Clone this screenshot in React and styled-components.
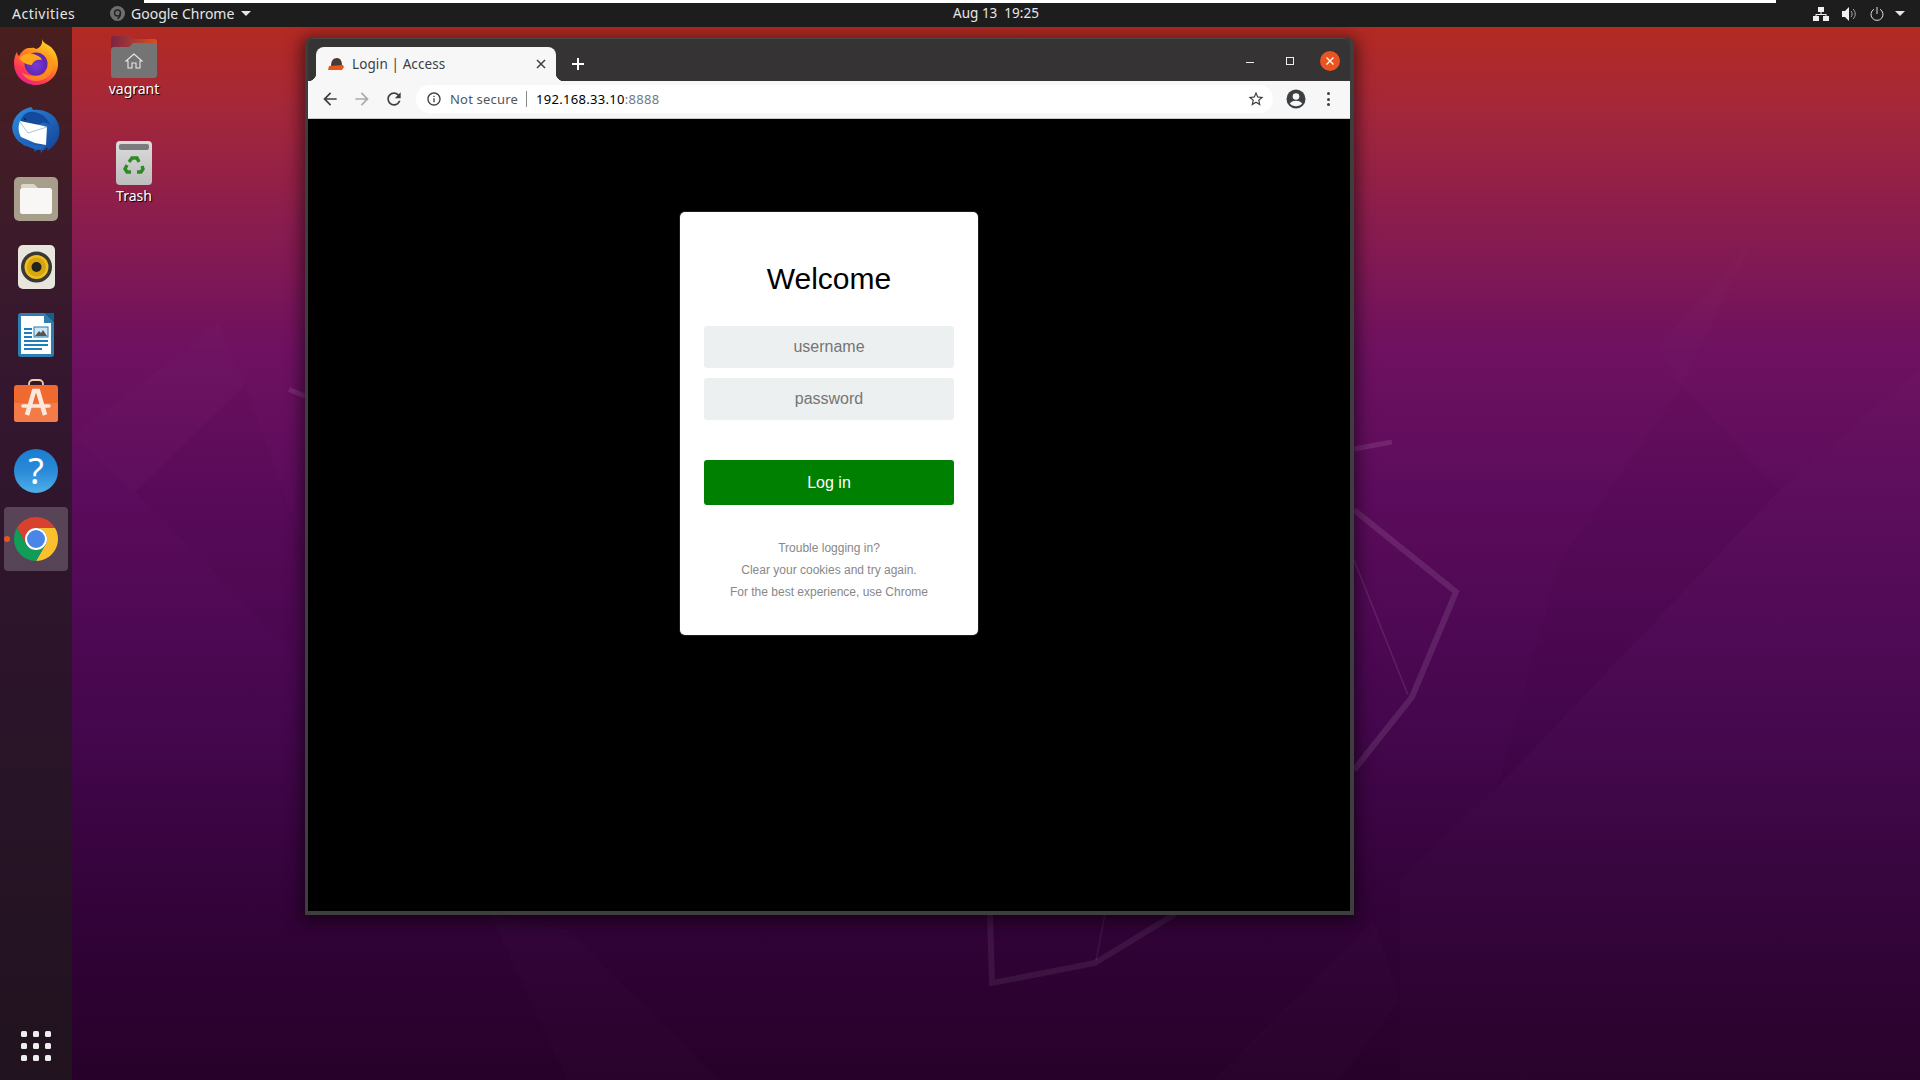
import React from 'react';
import styled, { createGlobalStyle } from 'styled-components';

const Global = createGlobalStyle`
  html, body { margin: 0; padding: 0; background: #000; }
  body { width: 1920px; height: 1080px; overflow: hidden; font-family: "Noto Sans", sans-serif; }
  input::placeholder { color: #757575; opacity: 1; }
`;

const Screen = styled.div`
  position: relative; width: 1920px; height: 1080px; overflow: hidden;
  display: flex; flex-direction: column;
  background: linear-gradient(180deg, #b32a23 0, #b32a23 30px, #a4273a 110px, #8a1d4e 220px, #6e1160 350px, #5c0c5c 490px, #47074f 700px, #33033a 900px, #270129 1080px);
`;
const Wallpaper = styled.svg`position: absolute; left: 0; top: 0; width: 1920px; height: 1080px;`;
const TopBar = styled.header`
  position: relative; z-index: 2; height: 27px; flex: none; background: #1d1d1d; color: #e6e6e6;
  display: grid; grid-template-columns: 1fr auto 1fr; align-items: center; font-size: 14px; line-height: 27px;
`;
const LoadStrip = styled.div`position: absolute; left: 144px; top: 0; width: 1632px; height: 3px; background: #fff;`;
const TopLeft = styled.div`display: flex; align-items: center; padding-left: 12px;`;
const Activities = styled.span`width: 98px; flex: none; letter-spacing: .5px;`;
const AppMenu = styled.span`display: flex; align-items: center; gap: 6px; letter-spacing: 0;`;
const Caret = styled.i`width: 0; height: 0; border: 5px solid transparent; border-top: 5px solid #e6e6e6; border-bottom: 0; margin-left: 1px;`;
const TrayCaret = styled(Caret)`margin-left: -2px;`;
const Clock = styled.time`font-size: 13.5px; white-space: pre; margin-left: 72px;`;
const Tray = styled.div`display: flex; justify-content: flex-end; align-items: center; gap: 13px; padding-right: 15px;`;
const Body = styled.div`position: relative; z-index: 1; flex: 1; display: flex; min-height: 0;`;
const Dock = styled.nav`
  width: 72px; flex: none; background: rgba(32, 26, 28, .72); display: flex; flex-direction: column; align-items: center;
  padding: 2px 0 16px; box-sizing: border-box;
`;
const DockSlot = styled.div`
  position: relative; width: 64px; height: ${p => p.$active ? 64 : 68}px; margin: ${p => p.$active ? '2px 0' : 0};
  display: flex; align-items: center; justify-content: center; border-radius: 4px; flex: none;
  background: ${p => p.$active ? 'rgba(255,255,255,.2)' : 'transparent'};
`;
const RunDot = styled.span`position: absolute; left: 0; top: 29px; width: 6px; height: 6px; border-radius: 50%; background: #e95420;`;
const AppGrid = styled.div`margin-top: auto; display: grid; grid-template-columns: repeat(3, 6px); gap: 6px; padding-bottom: 3px;`;
const GridDot = styled.span`width: 6px; height: 6px; border-radius: 1.5px; background: #eeeeee;`;
const HelpBadge = styled.div`
  width: 44px; height: 44px; border-radius: 50%; background: linear-gradient(180deg, #1b7dcf 0, #2a8ad8 50%, #4fb0e8 100%);
  color: #fff; font-size: 36px; line-height: 44px; text-align: center;
`;
const Desktop = styled.div`flex: 1; position: relative; min-width: 0;`;
const DesktopIcons = styled.div`display: flex; flex-direction: column; width: 124px; padding-top: 7px;`;
const DesktopItem = styled.div`
  height: 107px; display: flex; flex-direction: column; align-items: center;
  color: #fff; font-size: 14px; line-height: 19px; text-shadow: 1px 1px 1px #000;
`;
const ItemArt = styled.div`height: 44px; display: flex; align-items: flex-end; margin-bottom: 1px;`;

const Win = styled.section`
  position: absolute; left: 233px; top: 11px; width: 1049px; height: 877px; box-sizing: border-box;
  border: solid #3e3e3e; border-width: 0 4px 4px 3px; border-radius: 6px 6px 1px 1px;
  background: #353333; display: flex; flex-direction: column; overflow: visible;
  box-shadow: 0 3px 16px 4px rgba(0,0,0,.5);
`;
const TitleBar = styled.div`height: 43px; flex: none; display: flex; align-items: flex-end; padding-left: 8px; border-top: 1px solid #4a4a4a; box-sizing: border-box; border-radius: 6px 6px 0 0; position: relative;`;
const Tab = styled.div`
  position: relative; width: 240px; height: 34px; box-sizing: border-box; background: #f7f7f7; border-radius: 8px 8px 0 0;
  display: flex; align-items: center; padding: 0 10px 0 12px; gap: 8px; color: #3c4043; font-size: 13.5px;
  &::before, &::after { content: ''; position: absolute; bottom: 0; width: 8px; height: 8px; }
  &::before { left: -8px; background: radial-gradient(circle at 0 0, transparent 8px, #f7f7f7 8.5px); }
  &::after { right: -8px; background: radial-gradient(circle at 100% 0, transparent 8px, #f7f7f7 8.5px); }
`;
const TabTitle = styled.span`flex: 1; white-space: nowrap; letter-spacing: .1px;`;
const NewTab = styled.div`width: 44px; height: 34px; display: flex; align-items: center; justify-content: center;`;
const WinControls = styled.div`margin-left: auto; align-self: flex-start; display: flex; align-items: center; height: 44px; padding-right: 10px;`;
const Minimize = styled.span`width: 8px; height: 1px; background: #eee; margin-top: 3px;`;
const Maximize = styled.span`width: 6px; height: 6px; border: 1px solid #eee; margin-left: 32px;`;
const CloseBtn = styled.span`width: 20px; height: 20px; margin-left: 26px; border-radius: 50%; background: #e95420; display: flex; align-items: center; justify-content: center;`;
const Toolbar = styled.div`height: 38px; flex: none; box-sizing: border-box; background: #f7f7f7; border-bottom: 1px solid #c8c8c8; display: flex; align-items: center; padding: 0 12px 1px 12px;`;
const NavBtn = styled.span`width: 32px; flex: none; display: flex; justify-content: flex-start;`;
const Omnibox = styled.div`
  width: 857px; height: 28px; flex: none; background: #fff; border-radius: 14px; display: flex; align-items: center; padding: 0 8px 0 10px; box-sizing: border-box; font-size: 13px;
`;
const Secure = styled.span`color: #50575e; margin-left: 8px; letter-spacing: .2px;`;
const Sep = styled.span`width: 1px; height: 16px; background: #8a8a8a; margin: 0 9px 0 8px;`;
const Url = styled.span`color: #000; letter-spacing: .3px; span { color: #6f7a85; }`;
const OmniEnd = styled.span`margin-left: auto; display: flex;`;
const ToolEnd = styled.div`display: flex; align-items: center; margin-left: 13px;`;
const MenuDots = styled.div`margin-left: 21px; display: flex; flex-direction: column; gap: 2.5px;`;
const Dot = styled.i`width: 3px; height: 3px; border-radius: 50%; background: #3c4043;`;
const Page = styled.main`flex: 1; background: #000; display: flex; flex-direction: column; align-items: center; padding-top: 93px; min-height: 0; font-family: "Liberation Sans", Arial, sans-serif;`;
const Card = styled.form`
  width: 298px; height: 423px; box-sizing: border-box; background: #fff; border-radius: 5px; padding: 40px 24px 0; text-align: center;
  display: flex; flex-direction: column; box-shadow: 0 0 0 1px #1c1c1c;
`;
const Heading = styled.h1`margin: 0 0 20px; font-size: 30px; font-weight: 400; line-height: 54px; color: #000;`;
const Field = styled.input`
  display: block; width: 100%; height: 42px; box-sizing: border-box; border: 0; border-radius: 3px; background: #ecf0f1; text-align: center;
  font: 16px "Liberation Sans", Arial, sans-serif; margin-bottom: 10px; padding: 0; outline: 0;
`;
const Submit = styled.button`
  width: 100%; height: 45px; margin-top: 30px; border: 0; border-radius: 3px; background: #008000; color: #fff; font: 16px "Liberation Sans", Arial, sans-serif; padding: 0;
`;
const Help = styled.p`margin: 32px 0 0; font-size: 12px; line-height: 22px; color: #888;`;

const FirefoxIcon = () => (
  <svg width="46" height="46" viewBox="0 0 46 46" style={{ marginTop: -2 }}>
    <defs>
      <linearGradient id="ff1" x1="0.8" y1="0" x2="0.2" y2="1"><stop offset="0" stopColor="#ffe226" /><stop offset=".4" stopColor="#ff8a1e" /><stop offset=".75" stopColor="#ff3a50" /><stop offset="1" stopColor="#e3199a" /></linearGradient>
      <radialGradient id="ff2" cx=".5" cy=".55" r=".55"><stop offset="0" stopColor="#7b3cd8" /><stop offset="1" stopColor="#5a22a8" /></radialGradient>
    </defs>
    <path d="M29 0c1 4 5 5 9 8 5 5 7 11 7 17 0 12-10 21-22 21C10 46 1 36 1 24c0-5 2-10 3-11 0 2 1 3 2 4 2-4 5-7 9-8 3 0 6-1 8 1 4-1 7-5 6-10z" fill="url(#ff1)" />
    <circle cx="23" cy="25" r="11.500" fill="url(#ff2)" />
    <path d="M6 19c4-4 10-6 17-3 2 1 5 2 6 5-5-1-9 1-10 5-6 0-10-3-13-7z" fill="#ffa61c" />
    <path d="M23 37c7 0 12-5 12-12 1-5-1-9-4-12 6 3 10 8 9 15-1 8-8 14-17 14-6 0-11-3-14-8 4 2 9 3 14 3z" fill="#ff9b16" opacity=".75" />
  </svg>
);
const ThunderbirdIcon = () => (
  <svg width="48" height="48" viewBox="0 0 48 48">
    <defs><linearGradient id="tb" x1="0" y1="0" x2="1" y2="1"><stop offset="0" stopColor="#2f8fe0" /><stop offset="1" stopColor="#123f96" /></linearGradient></defs>
    <path d="M19 0c1 1 2 2 2 3 10-1 20 3 24 11 5 10 2 21-6 27l-4 3 1-4-8 6 2-6-8 5 1-5-10-1L6 34C1 28-1 22 1 16 3 8 10 2 19 0z" fill="url(#tb)" />
    <path d="M12 8c4-4 9-4 14-2 7 2 10 7 12 12-3-2-6-3-8-2L18 20 9 14c0-2 1-4 3-6z" fill="#134a9c" />
    <path d="M8 14l24 5 3 1-1 18-11-2-14-6C6 25 6 19 8 14z" fill="#fff" />
    <path d="M8 15l8 11 19-6" fill="none" stroke="#9cb5cc" strokeWidth=".8" />
    <circle cx="13" cy="12" r="1" fill="#0b2440" />
    <path d="M6 30c4 4 10 6 16 8 4 1 8 1 12 0l-5 5c-9 0-18-5-23-13z" fill="#1d66c0" />
  </svg>
);
const FilesIcon = () => (
  <svg width="44" height="44" viewBox="0 0 44 44">
    <rect x="0" y="0" width="44" height="44" rx="5" fill="#a79e8b" />
    <path d="M7 9a2 2 0 0 1 2-2h11l4 4h-17z" fill="#dbd6c8" />
    <rect x="6" y="11" width="32" height="26" rx="2.500" fill="#f8f7f5" />
  </svg>
);
const RhythmboxIcon = () => (
  <svg width="37" height="44" viewBox="0 0 37 44">
    <rect width="37" height="44" rx="5" fill="#e8e5dc" />
    <circle cx="18.500" cy="22" r="15.500" fill="#3a3836" />
    <circle cx="18.500" cy="22" r="12" fill="#efbf20" />
    <circle cx="18.500" cy="22" r="9.500" fill="#d6a612" />
    <circle cx="18.500" cy="22" r="5" fill="#222" />
  </svg>
);
const WriterIcon = () => (
  <svg width="36" height="44" viewBox="0 0 36 44">
    <path d="M3 0h24l9 9v32a3 3 0 0 1-3 3H3a3 3 0 0 1-3-3V3a3 3 0 0 1 3-3z" fill="#2d7fb0" />
    <path d="M3 3h23v7h7v31H3z" fill="#fff" />
    <path d="M27 0l9 9V0z" fill="#11638f" />
    <g fill="#1f7eb8"><rect x="6" y="15" width="8" height="2" /><rect x="6" y="19" width="8" height="2" /><rect x="6" y="23" width="8" height="2" /><rect x="6" y="27" width="24" height="2" /><rect x="6" y="31" width="24" height="2" /><rect x="6" y="35" width="18" height="2" /></g>
    <rect x="16" y="14" width="14" height="10" fill="#cfe6f4" stroke="#1f7eb8" />
    <path d="M17 23l4-5 2 2 2-3 4 6z" fill="#555" />
  </svg>
);
const SoftwareIcon = () => (
  <svg width="44" height="43" viewBox="0 0 44 43" style={{ marginTop: -5 }}>
    <path d="M15 7V5a4 4 0 0 1 4-4h6a4 4 0 0 1 4 4v2" fill="none" stroke="#f3d0a8" strokeWidth="1.800" />
    <rect y="6" width="44" height="37" rx="3" fill="#f06a30" />
    <path d="M0 24h44v16a3 3 0 0 1-3 3H3a3 3 0 0 1-3-3z" fill="#f47a48" />
    <path d="M13 36L20 12h4l7 24" fill="none" stroke="#fbe9e0" strokeWidth="4.500" />
    <path d="M9 27h26" stroke="#fbe9e0" strokeWidth="3.500" strokeLinecap="round" />
  </svg>
);
const ChromeLogo = () => (
  <svg width="44" height="44" viewBox="2 2 44 44">
    <path d="M43.050 13L24 13A11 11 0 0 0 14.470 29.500L4.950 13A22 22 0 0 1 43.050 13Z" fill="#d9412f" />
    <path d="M24 46L33.530 29.500A11 11 0 0 0 24 13L43.050 13A22 22 0 0 1 24 46Z" fill="#fbc02d" />
    <path d="M4.950 13L14.470 29.500A11 11 0 0 0 33.530 29.500L24 46A22 22 0 0 1 4.950 13Z" fill="#0f9d58" />
    <circle cx="24" cy="24" r="11" fill="#fff" />
    <circle cx="24" cy="24" r="9" fill="#4a86e8" />
  </svg>
);
const TrayChrome = () => (
  <svg width="15" height="15" viewBox="0 0 15 15"><circle cx="7.500" cy="7.500" r="7.500" fill="#6e6e6e" /><circle cx="7.500" cy="7" r="3" fill="none" stroke="#222" strokeWidth="1.400" /><path d="M10.500 7c0 3-1.500 5-3 6" fill="none" stroke="#222" strokeWidth="1.400" /></svg>
);
const Folder = () => (
  <svg width="46" height="42" viewBox="0 0 46 42">
    <defs><linearGradient id="fd" x1="0" y1="0" x2="1" y2="0"><stop offset="0" stopColor="#7a2444" /><stop offset="1" stopColor="#d8501f" /></linearGradient></defs>
    <path d="M0 3a3 3 0 0 1 3-3h14l5 3h21a3 3 0 0 1 3 3v8H0z" fill="url(#fd)" />
    <path d="M0 14a3 3 0 0 1 3-3h15l4-4h21a3 3 0 0 1 3 3v29a3 3 0 0 1-3 3H3a3 3 0 0 1-3-3z" fill="#747474" />
    <path d="M23 18l-8 7h2v7h4v-5h4v5h4v-7h2z" fill="none" stroke="#e8e8e8" strokeWidth="1.100" />
  </svg>
);
const Trash = () => (
  <svg width="36" height="44" viewBox="0 0 36 44">
    <defs><linearGradient id="tr" x1="0" y1="0" x2="0" y2="1"><stop offset="0" stopColor="#dcdcdc" /><stop offset="1" stopColor="#bdbdbd" /></linearGradient></defs>
    <rect width="36" height="44" rx="4" fill="url(#tr)" />
    <rect x="3" y="3" width="30" height="6" rx="2" fill="#7b7b7b" />
    <g fill="none" stroke="#2e8b23" strokeWidth="3.400">
      <path d="M13 21l3-4h5l2 4" /><path d="M26 25l1 3-2 3h-4" /><path d="M15 31h-4l-2-3 2-4" />
    </g>
  </svg>
);
const Favicon = () => (
  <svg width="16" height="14" viewBox="0 0 16 14">
    <path d="M3 9c0-5 2-8 6-8s5 4 5 8z" fill="#4a3a35" /><path d="M1 9l14-1 1 2-2 3H0z" fill="#e2581e" />
  </svg>
);
const Mat = ({ d, size = 20, fill = '#3c4043' }) => (
  <svg width={size} height={size} viewBox="0 0 24 24"><path d={d} fill={fill} /></svg>
);
const Avatar = () => (
  <svg width="20" height="20" viewBox="0 0 20 20">
    <circle cx="10" cy="10" r="9.500" fill="#3c4043" /><circle cx="10" cy="7.500" r="3.300" fill="#f7f7f7" />
    <path d="M3.800 14.500c1.500-2 4-2.700 6.200-2.700s4.700.7 6.200 2.700c-1.500 1.800-3.700 2.800-6.200 2.800s-4.700-1-6.200-2.800z" fill="#f7f7f7" />
  </svg>
);
const BACK = 'M20 11H7.830l5.590-5.590L12 4l-8 8 8 8 1.410-1.410L7.830 13H20v-2z';
const FWD = 'M12 4l-1.410 1.410L16.170 11H4v2h12.170l-5.580 5.590L12 20l8-8z';
const RELOAD = 'M17.650 6.350C16.200 4.900 14.210 4 12 4c-4.420 0-7.990 3.580-7.990 8s3.570 8 7.990 8c3.730 0 6.840-2.550 7.730-6h-2.080c-.82 2.330-3.040 4-5.650 4-3.310 0-6-2.690-6-6s2.690-6 6-6c1.660 0 3.140.69 4.220 1.780L13 11h7V4l-2.350 2.350z';
const INFO = 'M11 7h2v2h-2zm0 4h2v6h-2zm1-9C6.480 2 2 6.480 2 12s4.480 10 10 10 10-4.480 10-10S17.520 2 12 2zm0 18c-4.410 0-8-3.590-8-8s3.590-8 8-8 8 3.590 8 8-3.590 8-8 8z';
const STAR = 'M22 9.240l-7.190-.62L12 2 9.190 8.630 2 9.240l5.460 4.730L5.820 21 12 17.270 18.180 21l-1.630-7.030L22 9.240zM12 15.400l-3.760 2.270 1-4.280-3.320-2.880 4.380-.38L12 6.100l1.710 4.040 4.380.38-3.320 2.880 1 4.280L12 15.400z';

const HelpIcon = () => <HelpBadge>?</HelpBadge>;
const dockApps = [FirefoxIcon, ThunderbirdIcon, FilesIcon, RhythmboxIcon, WriterIcon, SoftwareIcon, HelpIcon];

export default function App() {
  return (
    <>
      <Global />
      <Screen>
        <Wallpaper viewBox="0 0 1920 1080">
          <g fill="#fff" fillOpacity=".012">
            <path d="M219 323L245 385 135 492 72 436z" />
            <path d="M1751 242L1682 386 1657 349z" />
            <path d="M1920 369L1780 490 1498 786 1400 880 1400 1080 1920 1080z" />
            <path d="M490 914L567 1080 720 1080 567 930z" />
            <path d="M1374 920L1212 1080 1340 1080 1400 1000z" />
          </g>
          <g fill="#000" fillOpacity=".025">
            <path d="M1682 386L1780 490 1498 786 1560 560z" />
            <path d="M245 385L135 492 292 650 305 550z" />
          </g>
          <g fill="none" stroke="#fff" strokeOpacity=".1" strokeLinejoin="miter">
            <path d="M289 389.500L305 396" strokeWidth="5" />
            <path d="M1354 449L1392 442" strokeWidth="5" />
            <path d="M1354 510L1456 592 1412 697 1354 770" strokeWidth="6" />
            <path d="M1354 560L1408 695" strokeWidth="1.500" />
            <path d="M990 914L992 983 1095 963 1175 914" strokeWidth="6" strokeOpacity=".07" />
            <path d="M1105 914L1096 961" strokeWidth="1.500" strokeOpacity=".07" />
          </g>
        </Wallpaper>
        <TopBar>
          <LoadStrip />
          <TopLeft>
            <Activities>Activities</Activities>
            <AppMenu><TrayChrome />Google Chrome<Caret /></AppMenu>
          </TopLeft>
          <Clock>Aug 13  19:25</Clock>
          <Tray>
            <svg width="16" height="14" viewBox="0 0 16 14" fill="#f0f0f0"><rect x="5" y="0" width="6" height="5" /><rect x="0" y="9" width="6" height="5" /><rect x="10" y="9" width="6" height="5" /><path d="M7.500 5h1v2h5v2h-1V8h-9v1h-1V7h5z" /></svg>
            <svg width="15" height="14" viewBox="0 0 15 14" fill="none"><path d="M0 4h3l4-4v14l-4-4H0z" fill="#f0f0f0" /><path d="M9 4c1.500 1.500 1.500 4.500 0 6M11 2c3 3 3 7 0 10" stroke="#aaa" strokeWidth="1" /></svg>
            <svg width="14" height="14" viewBox="0 0 14 14" fill="none" stroke="#ddd" strokeWidth="1"><path d="M4 2.200a6 6 0 1 0 6 0" /><path d="M7 0v7" /></svg>
            <TrayCaret />
          </Tray>
        </TopBar>
        <Body>
          <Dock>
            {dockApps.map((Icon, i) => <DockSlot key={i}><Icon /></DockSlot>)}
            <DockSlot $active><RunDot /><ChromeLogo /></DockSlot>
            <AppGrid>{Array.from({ length: 9 }, (_, i) => <GridDot key={i} />)}</AppGrid>
          </Dock>
          <Desktop>
            <DesktopIcons>
              <DesktopItem><ItemArt><Folder /></ItemArt>vagrant</DesktopItem>
              <DesktopItem><ItemArt><Trash /></ItemArt>Trash</DesktopItem>
            </DesktopIcons>
            <Win>
              <TitleBar>
                <Tab>
                  <Favicon />
                  <TabTitle>Login | Access</TabTitle>
                  <svg width="10" height="10" viewBox="0 0 10 10" stroke="#3c4043" strokeWidth="1.500"><path d="M1 1l8 8M9 1l-8 8" /></svg>
                </Tab>
                <NewTab>
                  <svg width="12" height="12" viewBox="0 0 12 12" stroke="#fff" strokeWidth="2"><path d="M6 0v12M0 6h12" /></svg>
                </NewTab>
                <WinControls>
                  <Minimize />
                  <Maximize />
                  <CloseBtn>
                    <svg width="10" height="10" viewBox="0 0 10 10" stroke="#fff" strokeWidth="1.300"><path d="M1.500 1.500l7 7M8.500 1.500l-7 7" /></svg>
                  </CloseBtn>
                </WinControls>
              </TitleBar>
              <Toolbar>
                <NavBtn><Mat d={BACK} /></NavBtn>
                <NavBtn><Mat d={FWD} fill="#a9abad" /></NavBtn>
                <NavBtn><Mat d={RELOAD} /></NavBtn>
                <Omnibox>
                  <Mat d={INFO} size={16} />
                  <Secure>Not secure</Secure>
                  <Sep />
                  <Url>192.168.33.10<span>:8888</span></Url>
                  <OmniEnd><Mat d={STAR} size={18} /></OmniEnd>
                </Omnibox>
                <ToolEnd>
                  <Avatar />
                  <MenuDots><Dot /><Dot /><Dot /></MenuDots>
                </ToolEnd>
              </Toolbar>
              <Page>
                <Card onSubmit={e => e.preventDefault()}>
                  <Heading>Welcome</Heading>
                  <Field placeholder="username" />
                  <Field placeholder="password" type="password" />
                  <Submit type="button">Log in</Submit>
                  <Help>Trouble logging in?<br />Clear your cookies and try again.<br />For the best experience, use Chrome</Help>
                </Card>
              </Page>
            </Win>
          </Desktop>
        </Body>
      </Screen>
    </>
  );
}
